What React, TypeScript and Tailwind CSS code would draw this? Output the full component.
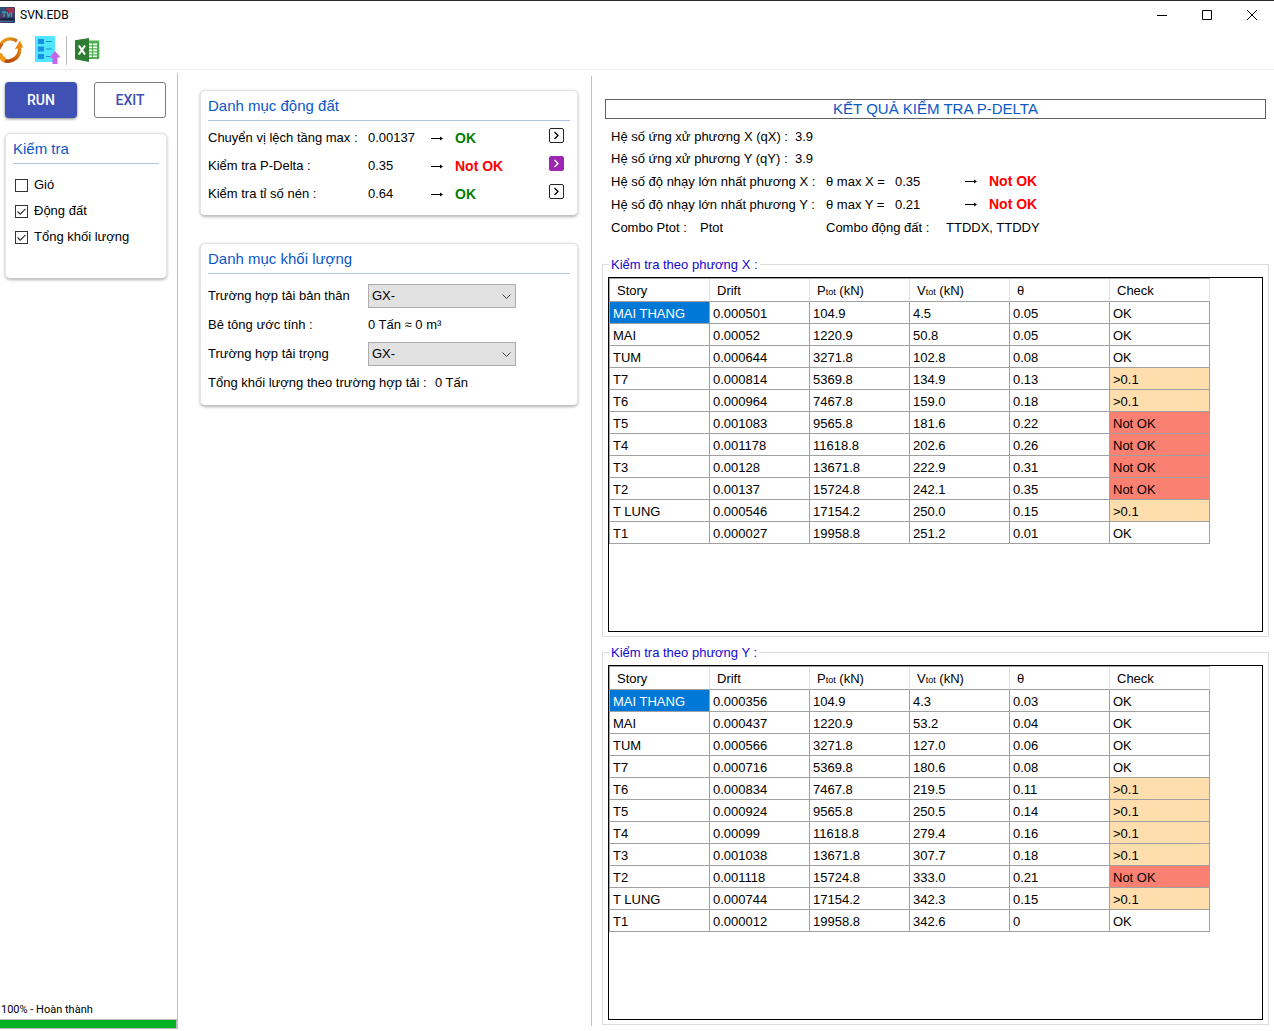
import { clsx } from "clsx";
import { useState } from "react";
import type { ReactNode } from "react";

type CheckState = "OK" | ">0.1" | "Not OK";
type StoryRow = [story: string, drift: string, ptot: string, vtot: string, theta: string, check: CheckState];

const ROWS_X: StoryRow[] = [
  ["MAI THANG", "0.000501", "104.9", "4.5", "0.05", "OK"],
  ["MAI", "0.00052", "1220.9", "50.8", "0.05", "OK"],
  ["TUM", "0.000644", "3271.8", "102.8", "0.08", "OK"],
  ["T7", "0.000814", "5369.8", "134.9", "0.13", ">0.1"],
  ["T6", "0.000964", "7467.8", "159.0", "0.18", ">0.1"],
  ["T5", "0.001083", "9565.8", "181.6", "0.22", "Not OK"],
  ["T4", "0.001178", "11618.8", "202.6", "0.26", "Not OK"],
  ["T3", "0.00128", "13671.8", "222.9", "0.31", "Not OK"],
  ["T2", "0.00137", "15724.8", "242.1", "0.35", "Not OK"],
  ["T LUNG", "0.000546", "17154.2", "250.0", "0.15", ">0.1"],
  ["T1", "0.000027", "19958.8", "251.2", "0.01", "OK"],
];

const ROWS_Y: StoryRow[] = [
  ["MAI THANG", "0.000356", "104.9", "4.3", "0.03", "OK"],
  ["MAI", "0.000437", "1220.9", "53.2", "0.04", "OK"],
  ["TUM", "0.000566", "3271.8", "127.0", "0.06", "OK"],
  ["T7", "0.000716", "5369.8", "180.6", "0.08", "OK"],
  ["T6", "0.000834", "7467.8", "219.5", "0.11", ">0.1"],
  ["T5", "0.000924", "9565.8", "250.5", "0.14", ">0.1"],
  ["T4", "0.00099", "11618.8", "279.4", "0.16", ">0.1"],
  ["T3", "0.001038", "13671.8", "307.7", "0.18", ">0.1"],
  ["T2", "0.001118", "15724.8", "333.0", "0.21", "Not OK"],
  ["T LUNG", "0.000744", "17154.2", "342.3", "0.15", ">0.1"],
  ["T1", "0.000012", "19958.8", "342.6", "0", "OK"],
];

const SEISMIC_CHECKS = [
  { id: "drift", label: "Chuyển vị lệch tầng max :", value: "0.00137", ok: true },
  { id: "pdelta", label: "Kiểm tra P-Delta :", value: "0.35", ok: false },
  { id: "compression", label: "Kiểm tra tỉ số nén :", value: "0.64", ok: true },
];

function AppLogo() {
  return (
    <svg width="15" height="16" viewBox="0 0 15 16" aria-hidden="true">
      <defs>
        <linearGradient id="logo-bg" x1="0" y1="0" x2="1" y2="1">
          <stop offset="0" stopColor="#1c5d84" />
          <stop offset="0.5" stopColor="#5a3560" />
          <stop offset="1" stopColor="#1d3b6b" />
        </linearGradient>
      </defs>
      <rect x="-2" width="17" height="16" rx="1" fill="url(#logo-bg)" />
      <path d="M6 1h8v5H9z" fill="#b8324a" opacity="0.75" />
      <path d="M2 5h4M4 5v5M7 5l1.500 5L10 6M11.500 5v5" stroke="#27a9b5" strokeWidth="1.300" fill="none" />
      <path d="M0 12.500h14M1 11l2 2 2-2 2 2 2-2 2 2 2-2" stroke="#16233f" strokeWidth="1.200" fill="none" />
      <path d="M0 14.500h13" stroke="#2e7fb0" strokeWidth="0.800" />
    </svg>
  );
}

function RefreshIcon() {
  return (
    <svg width="24" height="28" viewBox="0 0 24 28" aria-hidden="true">
      <defs>
        <linearGradient id="ring-a" x1="0" y1="0" x2="1" y2="1">
          <stop offset="0" stopColor="#f9b21a" />
          <stop offset="1" stopColor="#b5470f" />
        </linearGradient>
        <linearGradient id="ring-b" x1="0" y1="1" x2="1" y2="0">
          <stop offset="0" stopColor="#a93a10" />
          <stop offset="1" stopColor="#f9a00f" />
        </linearGradient>
      </defs>
      <path d="M0 6.500C4 1 12-.5 18 3.800l-2 2.600C11 3.200 5 4 2 9.500L0 12z" fill="url(#ring-a)" />
      <path d="M4 26.600c10 2 18.500-5 17.300-15h1.900L20 4.200 14.800 13.500l3-1.200c.6 6.700-5.500 11.700-12.800 10.900z" fill="url(#ring-b)" />
      <path d="M0 17l1.800 0C2.500 19.500 4 21 6.500 22l-2.500 4.500C2 25.600 .8 24.500 0 23z" fill="#f5980f" />
      <path d="M0 7.500L3.500 8 0 14z" fill="#c9600f" />
    </svg>
  );
}

function ReportUploadIcon() {
  return (
    <svg width="26" height="30" viewBox="0 0 26 30" aria-hidden="true">
      <rect x="0" y="1" width="20" height="26" rx="1" fill="#50e6ff" />
      <path d="M3 4h6v5H3zM3 11.500h6v5H3zM3 19h6v5H3z" fill="#1a8fe3" />
      <path d="M11 6.500h6M11 14h6M11 21.500h4" stroke="#1593c9" strokeWidth="1" />
      <path d="M20 16l5.500 6.500h-3V29h-5v-6.500h-3z" fill="#c466e8" />
    </svg>
  );
}

function ExcelIcon() {
  return (
    <svg width="25" height="26" viewBox="0 0 25 26" aria-hidden="true">
      <path d="M13 3.500h10.500a.8.800 0 0 1 .8.800v16.900a.8.800 0 0 1-.8.800H13z" fill="#4caf50" />
      <path
        d="M14 6.500h3v1.800h-3zM18 6.500h4v1.800h-4zM14 9.500h3v1.800h-3zM18 9.500h4v1.800h-4zM14 12.500h3v1.800h-3zM18 12.500h4v1.800h-4zM14 15.500h3v1.800h-3zM18 15.500h4v1.800h-4zM14 18.500h3v1.500h-3zM18 18.500h4v1.500h-4z"
        fill="#fff"
      />
      <path d="M0 3.200L14 1v24L0 22.300z" fill="#2e7d32" />
      <path d="M3.800 8.500L10 17.500M10 8.500L3.800 17.500" stroke="#fff" strokeWidth="2.200" />
    </svg>
  );
}

function Arrow() {
  return (
    <svg width="13" height="9" viewBox="0 0 13 9" aria-hidden="true">
      <path d="M0 4.500h11" stroke="#000" strokeWidth="1" />
      <path d="M9 2.500l3 2-3 2z" fill="#000" />
    </svg>
  );
}

function Card({ title, className, children }: { title: string; className?: string; children: ReactNode }) {
  return (
    <section
      className={clsx(
        "rounded-[5px] border border-[#e4e4e4] border-b-[#c4c4c4] bg-white px-[7px] shadow-[0_1px_3px_rgba(0,0,0,0.3)]",
        className,
      )}
    >
      <h2 className="h-[30px] border-b border-[#b0c4de] text-[15px] leading-[30px] text-[#0a57c8]">{title}</h2>
      {children}
    </section>
  );
}

function CheckOption({ label, defaultChecked }: { label: string; defaultChecked?: boolean }) {
  return (
    <label className="flex h-[26px] items-center gap-[6px]">
      <span className="relative flex h-[13px] w-[13px]">
        <input
          type="checkbox"
          defaultChecked={defaultChecked}
          className="peer h-[13px] w-[13px] appearance-none border border-[#333] bg-white"
        />
        <svg
          viewBox="0 0 13 13"
          className="pointer-events-none absolute inset-0 hidden peer-checked:block"
          aria-hidden="true"
        >
          <path d="M2.500 6.500l2.700 2.700 5.300-5.400" stroke="#333" strokeWidth="1.200" fill="none" />
        </svg>
      </span>
      {label}
    </label>
  );
}

function Status({ ok }: { ok: boolean }) {
  return <span className={clsx("text-[14px] font-bold", ok ? "text-[#008000]" : "text-[#ff0000]")}>{ok ? "OK" : "Not OK"}</span>;
}

function LoadCaseSelect({ id }: { id: string }) {
  return (
    <span className="relative w-[148px]">
      <select
        id={id}
        className="block h-[24px] w-full appearance-none border border-[#adadad] bg-[#e1e1e1] px-[3px] leading-[22px]"
      >
        <option>GX-</option>
      </select>
      <svg width="9" height="6" viewBox="0 0 9 6" className="pointer-events-none absolute top-[10px] right-[5px]" aria-hidden="true">
        <path d="M.5.5l4 4 4-4" stroke="#444" fill="none" />
      </svg>
    </span>
  );
}

function StoryTable({ title, rows }: { title: string; rows: StoryRow[] }) {
  const headers: ReactNode[] = [
    "Story",
    "Drift",
    <>P<sub className="bottom-0 text-[9px]">tot</sub> (kN)</>,
    <>V<sub className="bottom-0 text-[9px]">tot</sub> (kN)</>,
    "θ",
    "Check",
  ];

  return (
    <fieldset className="flex min-w-0 flex-1 flex-col border border-[#dcdcdc] px-[5px] pb-[4px]">
      <legend className="ml-[1px] px-[2px] pt-[2px] leading-[16px] text-[#1408d0]">{title}</legend>
      <div className="mt-[4px] flex-1 border border-black">
        <table className="table-fixed border-separate border-spacing-0 border-t border-l border-[#a0a0a0] text-left">
          <thead>
            <tr>
              {headers.map((header, i) => (
                <th
                  key={i}
                  className="h-[23px] w-[100px] border-r border-b border-r-[#e0e0e0] border-b-[#a0a0a0] px-[7px] pt-[2px] font-normal leading-[16px]"
                >
                  {header}
                </th>
              ))}
            </tr>
          </thead>
          <tbody>
            {rows.map((row, r) => (
              <tr key={row[0]}>
                {row.map((cell, c) => (
                  <td
                    key={c}
                    className={clsx(
                      "h-[22px] border-r border-b border-[#a0a0a0] px-[3px] pt-[2px] leading-[16px]",
                      r === 0 && c === 0 && "bg-[#0078d7] text-white",
                      c === 5 && cell === ">0.1" && "bg-[#ffdead]",
                      c === 5 && cell === "Not OK" && "bg-[#fa8072]",
                    )}
                  >
                    {cell}
                  </td>
                ))}
              </tr>
            ))}
          </tbody>
        </table>
      </div>
    </fieldset>
  );
}

function SensitivityRow({ axis, value }: { axis: string; value: string }) {
  return (
    <div className="flex h-[23px] items-center">
      <span className="w-[215px]">Hệ số độ nhạy lớn nhất phương {axis} :</span>
      <span className="w-[69px]">θ max {axis} =</span>
      <span className="w-[70px]">{value}</span>
      <span className="w-[24px]">
        <Arrow />
      </span>
      <Status ok={false} />
    </div>
  );
}

export default function App() {
  const [activeCheck, setActiveCheck] = useState("pdelta");

  return (
    <div className="flex min-h-screen flex-col border-t border-[#2b2b2b] bg-white font-['Liberation_Sans',Arial,sans-serif] text-[13px] text-black">
      <header className="flex h-[28px] items-center justify-between">
        <div className="flex items-center gap-[5px] font-['Roboto',sans-serif] text-[12px]">
          <AppLogo />
          <h1>SVN.EDB</h1>
        </div>
        <div className="flex">
          <button aria-label="Minimize" className="flex h-[28px] w-[45px] items-center justify-center">
            <svg width="10" height="10" viewBox="0 0 10 10">
              <path d="M0 5.500h10" stroke="#000" />
            </svg>
          </button>
          <button aria-label="Maximize" className="flex h-[28px] w-[45px] items-center justify-center">
            <svg width="10" height="10" viewBox="0 0 10 10">
              <path d="M.5.5h9v9h-9z" stroke="#000" fill="none" />
            </svg>
          </button>
          <button aria-label="Close" className="flex h-[28px] w-[45px] items-center justify-center">
            <svg width="10" height="10" viewBox="0 0 10 10">
              <path d="M0 0l10 10M10 0L0 10" stroke="#000" />
            </svg>
          </button>
        </div>
      </header>

      <nav className="flex h-[41px] items-center border-b border-[#ececec] pt-[2px]">
        <button aria-label="Refresh">
          <RefreshIcon />
        </button>
        <button aria-label="Upload report" className="ml-[11px]">
          <ReportUploadIcon />
        </button>
        <span className="mx-[5px] h-[29px] border-l border-[#bdbdbd]" />
        <button aria-label="Export to Excel" className="ml-[3px]">
          <ExcelIcon />
        </button>
      </nav>

      <main className="flex flex-1">
        <aside className="mt-[3px] mb-[2px] flex w-[178px] shrink-0 flex-col border-r border-[#b0c4de]">
          <div className="mt-[9px] flex gap-[17px] pl-[5px] font-['Roboto',sans-serif] text-[14px] font-medium">
            <button className="h-[36px] w-[72px] rounded-[4px] bg-[#3f51b5] text-white shadow-[0_1px_3px_rgba(0,0,0,0.5)]">
              RUN
            </button>
            <button className="h-[36px] w-[72px] rounded-[3px] border border-[#7a7a7a] text-[#3f51b5]">EXIT</button>
          </div>

          <Card title="Kiểm tra" className="mt-[15px] mr-[10px] ml-[5px] h-[146px]">
            <div className="mt-[8px] pl-[2px]">
              <CheckOption label="Gió" />
              <CheckOption label="Động đất" defaultChecked />
              <CheckOption label="Tổng khối lượng" defaultChecked />
            </div>
          </Card>

          <div className="mt-auto">
            <p className="pl-[1px] font-['Roboto',sans-serif] text-[11px] leading-[18px]">100% - Hoàn thành</p>
            <div
              role="progressbar"
              aria-valuenow={100}
              aria-label="Hoàn thành"
              className="h-[10px] border border-l-0 border-[#bcbcbc] bg-[#06b025]"
            />
          </div>
        </aside>

        <div className="mt-[6px] mb-[5px] w-[414px] shrink-0 border-r border-[#b0c4de] pt-[14px] pr-[13px] pl-[22px]">
          <Card title="Danh mục động đất" className="h-[126px]">
            <div className="mt-[3px]">
              {SEISMIC_CHECKS.map((check) => (
                <div key={check.id} className="flex h-[28px] items-center">
                  <span className="w-[160px]">{check.label}</span>
                  <span className="w-[63px]">{check.value}</span>
                  <span className="w-[24px]">
                    <Arrow />
                  </span>
                  <Status ok={check.ok} />
                  <button
                    aria-label={check.label}
                    onClick={() => setActiveCheck(check.id)}
                    className={clsx(
                      "mt-[4px] mr-[6px] ml-auto flex h-[15px] w-[15px] items-center justify-center self-start rounded-[2px] border",
                      activeCheck === check.id ? "border-[#9c27b0] bg-[#9c27b0] text-white" : "border-[#222] text-black",
                    )}
                  >
                    <svg width="7" height="9" viewBox="0 0 7 9" aria-hidden="true">
                      <path d="M1.500 1l3.500 3.500L1.500 8" stroke="currentColor" strokeWidth="1.300" fill="none" />
                    </svg>
                  </button>
                </div>
              ))}
            </div>
          </Card>

          <Card title="Danh mục khối lượng" className="mt-[27px] h-[163px]">
            <div className="mt-[7px]">
              <div className="flex h-[29px] items-center">
                <label htmlFor="self-weight" className="w-[160px]">
                  Trường hợp tải bản thân
                </label>
                <LoadCaseSelect id="self-weight" />
              </div>
              <div className="flex h-[29px] items-center">
                <span className="w-[160px]">Bê tông ước tính :</span>
                <span>0 Tấn ≈ 0 m³</span>
              </div>
              <div className="flex h-[29px] items-center">
                <label htmlFor="load-case" className="w-[160px]">
                  Trường hợp tải trọng
                </label>
                <LoadCaseSelect id="load-case" />
              </div>
              <div className="flex h-[29px] items-center">
                <span className="w-[227px]">Tổng khối lượng theo trường hợp tải :</span>
                <span>0 Tấn</span>
              </div>
            </div>
          </Card>
        </div>

        <section className="flex min-w-0 flex-1 flex-col pt-[29px] pr-[5px] pb-[6px] pl-[10px]">
          <h2 className="mr-[3px] ml-[3px] border border-[#5f5f5f] text-center text-[15px] leading-[18px] text-[#0a57c8]">
            KẾT QUẢ KIỂM TRA P-DELTA
          </h2>

          <div className="mt-[7px] pl-[9px]">
            <div className="flex h-[22px] items-center">
              <span className="w-[184px]">Hệ số ứng xử phương X (qX) :</span>
              <span>3.9</span>
            </div>
            <div className="flex h-[22px] items-center">
              <span className="w-[184px]">Hệ số ứng xử phương Y (qY) :</span>
              <span>3.9</span>
            </div>
            <SensitivityRow axis="X" value="0.35" />
            <SensitivityRow axis="Y" value="0.21" />
            <div className="flex h-[23px] items-center">
              <span className="w-[89px]">Combo Ptot :</span>
              <span className="w-[126px]">Ptot</span>
              <span className="w-[120px]">Combo động đất :</span>
              <span>TTDDX, TTDDY</span>
            </div>
          </div>

          <div className="mt-[16px] flex flex-1 flex-col gap-[6px]">
            <StoryTable title="Kiểm tra theo phương X :" rows={ROWS_X} />
            <StoryTable title="Kiểm tra theo phương Y :" rows={ROWS_Y} />
          </div>
        </section>
      </main>
    </div>
  );
}
